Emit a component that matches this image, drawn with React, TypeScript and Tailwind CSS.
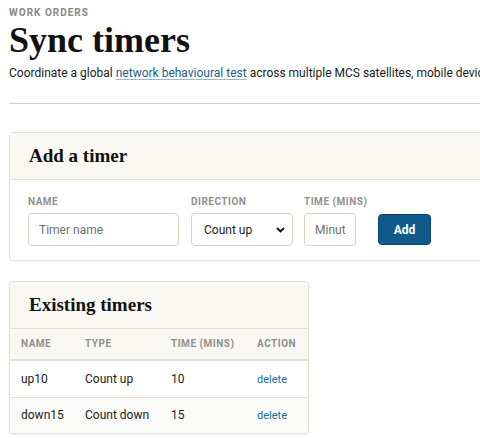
import React from "react";

const serif = "font-['Liberation_Serif',serif]";
const label = "text-[10px] font-bold tracking-[0.05em] text-[#8f8f8f] leading-[14px] whitespace-nowrap";

export default function App() {
  return (
    <div className="w-[480px] h-[438px] overflow-hidden bg-white font-['Roboto',sans-serif] text-[#1a1a1a]">
      <div className="w-[620px] pl-[9px] pt-[6px]">
        <div className="text-[10px] font-bold tracking-[0.1em] text-[#888] leading-[14px]">WORK ORDERS</div>
        <h1 className={`${serif} font-bold text-[36px] leading-[38px] mt-[1px] text-[#111]`}>Sync timers</h1>
        <p className="text-[12px] leading-[18px] mt-[5px] whitespace-nowrap">
          Coordinate a global{" "}
          <a className="text-[#1d5e8c] underline decoration-[#9bb8cf] underline-offset-2">network behavioural test</a>{" "}
          across multiple MCS satellites, mobile devices, and ground stations.
        </p>
        <div className="h-px bg-[#d6d1bd] mt-[21px]" />

        <section className="mt-[28px] border border-[#e6e0d3] rounded-[4px] shadow-[0_1px_2px_rgba(0,0,0,0.06)]">
          <div className="bg-[#faf8f3] border-b border-[#e6e0d3] h-[47px] flex items-center px-[19px]">
            <h2 className={`${serif} font-bold text-[19px] text-[#111]`}>Add a timer</h2>
          </div>
          <div className="flex items-end px-[18px] pt-[15px] pb-[14px]">
            <label className="flex flex-col gap-[4px] w-[163px]">
              <span className={label}>NAME</span>
              <input
                placeholder="Timer name"
                className="w-[151px] h-[33px] border border-[#d8d2c2] rounded-[4px] px-[10px] text-[12px] placeholder:text-[#6f6f6f] outline-none"
              />
            </label>
            <label className="flex flex-col gap-[4px] w-[113px]">
              <span className={label}>DIRECTION</span>
              <div className="relative w-[102px] h-[33px] border border-[#d8d2c2] rounded-[4px] flex items-center pl-[12px] text-[12px]">
                Count up
                <svg className="absolute right-[7px] top-[13px]" width="9" height="6" viewBox="0 0 9 6">
                  <path d="M1 1l3.5 3.5L8 1" fill="none" stroke="#111" strokeWidth="1.8" />
                </svg>
              </div>
            </label>
            <label className="flex flex-col gap-[4px] w-[74px]">
              <span className={label}>TIME (MINS)</span>
              <input
                placeholder="Minutes"
                className="w-[52px] h-[33px] border border-[#d8d2c2] rounded-[4px] px-[10px] text-[12px] placeholder:text-[#6f6f6f] outline-none"
              />
            </label>
            <button className="mb-[1px] w-[53px] h-[31px] rounded-[4px] bg-[#0f5a8a] border border-[#0b4670] text-white text-[12px] font-bold">
              Add
            </button>
          </div>
        </section>

        <section className="mt-[20px] w-[300px] border border-[#e6e0d3] rounded-[4px] shadow-[0_1px_3px_rgba(0,0,0,0.08)] overflow-hidden">
          <div className="bg-[#faf8f3] border-b border-[#e6e0d3] h-[47px] flex items-center px-[19px]">
            <h2 className={`${serif} font-bold text-[19px] text-[#111]`}>Existing timers</h2>
          </div>
          <table className="w-full table-fixed text-left border-collapse">
            <thead>
              <tr className="bg-[#faf8f3] border-b-2 border-[#e6e0d3] h-[31px]">
                <th className={`pl-[11px] w-[64px] ${label}`}>NAME</th>
                <th className={`pl-[11px] w-[86px] ${label}`}>TYPE</th>
                <th className={`pl-[11px] w-[86px] ${label}`}>TIME (MINS)</th>
                <th className={`pl-[11px] ${label}`}>ACTION</th>
              </tr>
            </thead>
            <tbody className="text-[12px]">
              <tr className="h-[37px] border-b border-[#e6e0d3] bg-white">
                <td className="pl-[11px]">up10</td>
                <td className="pl-[11px]">Count up</td>
                <td className="pl-[11px]">10</td>
                <td className="pl-[11px]"><a className="text-[#1d6aa0] text-[11px]">delete</a></td>
              </tr>
              <tr className="h-[36px] bg-[#fafaf9]">
                <td className="pl-[11px] whitespace-nowrap">down15</td>
                <td className="pl-[11px] whitespace-nowrap">Count down</td>
                <td className="pl-[11px]">15</td>
                <td className="pl-[11px]"><a className="text-[#1d6aa0] text-[11px]">delete</a></td>
              </tr>
            </tbody>
          </table>
        </section>
      </div>
    </div>
  );
}
